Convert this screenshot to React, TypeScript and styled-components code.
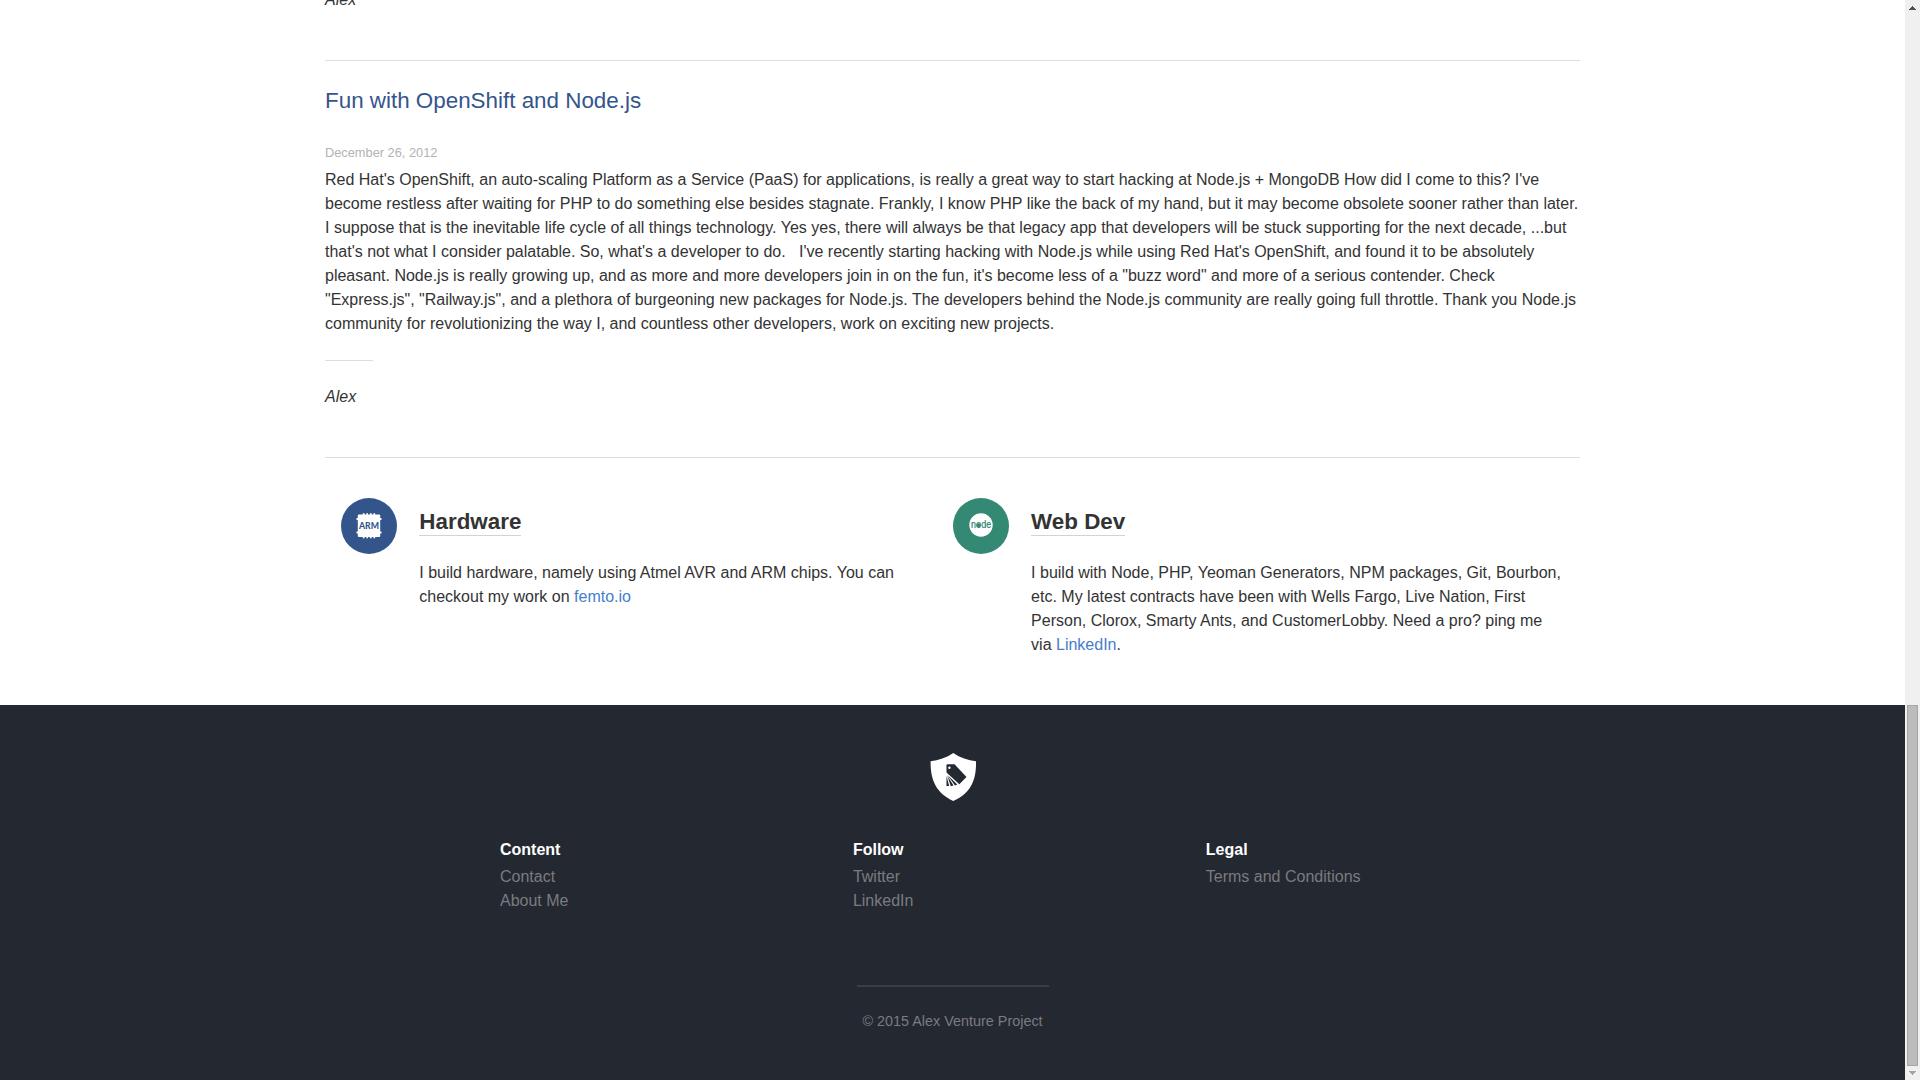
import React from "react";
import styled, { createGlobalStyle } from "styled-components";

const GlobalStyle = createGlobalStyle`
  *, *::before, *::after { box-sizing: border-box; }
  html, body { margin: 0; padding: 0; background: #fff; overflow: hidden; }
  body {
    color: #333;
    font-family: "Liberation Sans", Arial, Helvetica, sans-serif;
    font-size: 16px;
    line-height: 24px;
  }
  h2, h3, h4, p, ul { margin: 0; padding: 0; }
  ul { list-style: none; }
  a { text-decoration: none; }
`;

const Viewport = styled.div`
  display: flex;
  width: 1920px;
  height: 1080px;
  overflow: hidden;
`;

const Page = styled.div`
  display: flex;
  flex-direction: column;
  width: 1905px;
  height: 1080px;
  overflow: hidden;
`;

const Content = styled.main`
  width: 1255px;
  height: 705px;
  flex: none;
  margin: 0 auto;
`;

const PreviousAuthor = styled.p`
  height: 60px;
  margin-top: -12px;
  margin-bottom: 12px;
  font-style: italic;
`;

const Article = styled.article`
  border-top: 1px solid #ddd;
  border-bottom: 1px solid #ddd;
  height: 398px;
`;

const Title = styled.h2`
  padding-top: 26px;
  font-size: 22.4px;
  font-weight: 400;
  line-height: 28px;
  color: #34558b;
`;

const PostDate = styled.p`
  margin-top: 26px;
  padding-top: 2px;
  height: 27px;
  font-size: 12.8px;
  line-height: 19px;
  color: #b3b3b3;
`;

const Body = styled.p`
  white-space: pre-line;
`;

const ShortRule = styled.div`
  width: 48px;
  height: 1px;
  margin: 24px 0;
  background: #ddd;
`;

const Author = styled.p`
  font-style: italic;
`;

const Features = styled.section`
  display: grid;
  grid-template-columns: 611.8px 612px;
  padding: 40px 0 0 16px;
`;

const Feature = styled.div`
  display: flex;
  gap: 22.3px;
`;

const Badge = styled.div<{ $color: string }>`
  display: flex;
  align-items: center;
  justify-content: center;
  flex: none;
  width: 56px;
  height: 56px;
  border-radius: 50%;
  background: ${(p) => p.$color};
`;

const FeatureText = styled.div`
  width: 534px;
  padding-top: 9px;
`;

const FeatureTitle = styled.h3`
  width: fit-content;
  height: 29px;
  margin-bottom: 25px;
  padding-top: 1px;
  border-bottom: 1px solid #d3d3d3;
  font-size: 22.4px;
  font-weight: 700;
  line-height: 28px;
`;

const Link = styled.a`
  color: #477dca;
`;

const Footer = styled.footer`
  display: flex;
  flex-direction: column;
  align-items: center;
  width: 100%;
  height: 375px;
  padding-top: 48px;
  background: #242830;
`;

const FooterLinks = styled.div`
  display: grid;
  grid-template-columns: repeat(3, 352.9px);
  width: 1059px;
  margin-top: 37px;
  margin-left: 154px;
  height: 147px;
`;

const FooterHeading = styled.h4`
  font-size: 16px;
  font-weight: 700;
  color: #fff;
  height: 27px;
`;

const FooterLink = styled.a`
  display: block;
  color: #797c80;
`;

const FooterRule = styled.div`
  width: 192px;
  height: 2px;
  background: #3a3e45;
`;

const Copyright = styled.p`
  margin-top: 22px;
  font-size: 14.4px;
  color: #797c80;
`;

const Scrollbar = styled.div`
  display: flex;
  flex-direction: column;
  align-items: center;
  justify-content: space-between;
  width: 15px;
  height: 1080px;
  background: #f0f0f0;
`;

const Arrow = styled.svg`
  display: block;
  width: 15px;
  height: 14px;
`;

const Thumb = styled.div`
  width: 11px;
  height: 361px;
  margin: 691px 0 0 0;
  border: 1px solid #a6a6a6;
  background: #bcbcbc;
`;

const ChipIcon = () => (
  <svg width="28" height="28" viewBox="0 0 28 28">
    <rect x="2.800" y="2.500" width="22.400" height="22.500" rx="1" fill="#fff" />
    <g stroke="#fff" strokeWidth="1.8" strokeLinecap="round">
      <path d="M8.700 2V25.500M12.200 2V25.500M15.800 2V25.500M19.300 2V25.500" />
      <path d="M2.200 7H25.800M2.200 20.500H25.800" />
    </g>
    <text x="14" y="16.500" textAnchor="middle" textLength="20" lengthAdjust="spacingAndGlyphs" fontFamily="Lato, sans-serif" fontWeight="900" fontSize="9" fill="#34558b">ARM</text>
  </svg>
);

const NodeIcon = () => (
  <svg width="28" height="28" viewBox="0 0 28 28">
    <circle cx="14" cy="13" r="11.7" fill="#fff" />
    <text x="14" y="16" textAnchor="middle" textLength="20" lengthAdjust="spacingAndGlyphs" fontFamily="Roboto, sans-serif" fontWeight="400" fontSize="10.500" fill="#338973" stroke="#338973" strokeWidth=".2">node</text>
    <circle cx="11.5" cy="13.3" r="2.100" fill="#338973" />
  </svg>
);

const ShieldIcon = () => (
  <svg width="48" height="48" viewBox="0 0 48 48">
    <path d="M24.300 0C31 4.800 39 7.300 47 8.200C47.500 27 42 40 24.300 48C7 40 1.300 27 1.600 8.200C9.500 7.300 17.500 4.800 24.300 0Z" fill="#fff" />
    <path d="M17.500 12.300Q17.500 11.300 18.500 11.300H25.500L37.500 24L30.300 31.300L17.500 19.500Z" fill="#242830" />
    <circle cx="20.400" cy="14.800" r="1.200" fill="#fff" />
    <path d="M18.500 22L28.300 31.500L26 32.600Z" fill="#242830" />
    <path d="M18.200 22.500L24.500 32.400L21.800 33.200Z" fill="#242830" />
    <path d="M17.500 23L20.200 33H17.500Z" fill="#242830" />
  </svg>
);

const article = `Red Hat's OpenShift, an auto-scaling Platform as a Service (PaaS) for applications, is really a great way to start hacking at Node.js + MongoDB How did I come to this? I've become restless after waiting for PHP to do something else besides stagnate. Frankly, I know PHP like the back of my hand, but it may become obsolete sooner rather than later. I suppose that is the inevitable life cycle of all things technology. Yes yes, there will always be that legacy app that developers will be stuck supporting for the next decade, ...but that's not what I consider palatable. So, what's a developer to do. \u00a0 I've recently starting hacking with Node.js while using Red Hat's OpenShift, and found it to be absolutely pleasant. Node.js is really growing up, and as more and more developers join in on the fun, it's become less of a "buzz word" and more of a serious contender. Check "Express.js", "Railway.js", and a plethora of burgeoning new packages for Node.js. The developers behind the Node.js community are really going full throttle. Thank you Node.js community for revolutionizing the way I, and countless other developers, work on exciting new projects.`;

const footerColumns = [
  { heading: "Content", links: ["Contact", "About Me"] },
  { heading: "Follow", links: ["Twitter", "LinkedIn"] },
  { heading: "Legal", links: ["Terms and Conditions"] },
];

export default function App() {
  return (
    <Viewport>
      <GlobalStyle />
      <Page>
        <Content>
          <PreviousAuthor>Alex</PreviousAuthor>
          <Article>
            <Title>Fun with OpenShift and Node.js</Title>
            <PostDate>December 26, 2012</PostDate>
            <Body>{article}</Body>
            <ShortRule />
            <Author>Alex</Author>
          </Article>
          <Features>
            <Feature>
              <Badge $color="#34558b"><ChipIcon /></Badge>
              <FeatureText>
                <FeatureTitle>Hardware</FeatureTitle>
                <p>I build hardware, namely using Atmel AVR and ARM chips. You can checkout my work on <Link>femto.io</Link></p>
              </FeatureText>
            </Feature>
            <Feature>
              <Badge $color="#338973"><NodeIcon /></Badge>
              <FeatureText>
                <FeatureTitle>Web Dev</FeatureTitle>
                <p>I build with Node, PHP, Yeoman Generators, NPM packages, Git, Bourbon, etc. My latest contracts have been with Wells Fargo, Live Nation, First Person, Clorox, Smarty Ants, and CustomerLobby. Need a pro? ping me via&nbsp;<Link>LinkedIn</Link>.</p>
              </FeatureText>
            </Feature>
          </Features>
        </Content>
        <Footer>
          <ShieldIcon />
          <FooterLinks>
            {footerColumns.map((c) => (
              <div key={c.heading}>
                <FooterHeading>{c.heading}</FooterHeading>
                <ul>
                  {c.links.map((l) => (
                    <li key={l}><FooterLink>{l}</FooterLink></li>
                  ))}
                </ul>
              </div>
            ))}
          </FooterLinks>
          <FooterRule />
          <Copyright>© 2015 Alex Venture Project</Copyright>
        </Footer>
      </Page>
      <Scrollbar>
        <Arrow viewBox="0 0 15 14" shapeRendering="crispEdges"><path d="M7 6h1v1h1v1h1v1h1v1H4V9h1V8h1V7h1z" fill="#505050" /></Arrow>
        <Thumb />
        <Arrow viewBox="0 0 15 14" shapeRendering="crispEdges"><path d="M4 5h7v1h-1v1H9v1H8v1H7V8H6V7H5V6H4z" fill="#a3a3a3" /></Arrow>
      </Scrollbar>
    </Viewport>
  );
}
